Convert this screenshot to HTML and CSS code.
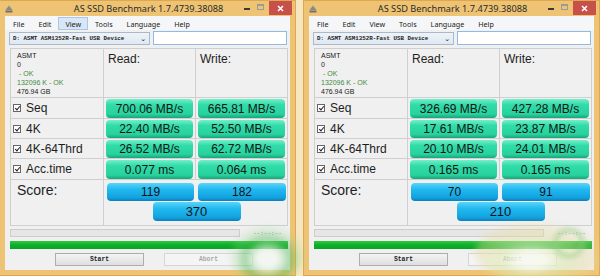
FILE: index.html
```html
<!DOCTYPE html>
<html lang="en">
<head>
<meta charset="UTF-8">
<title>AS SSD Benchmark</title>
<link rel="stylesheet" href="styles.css">
</head>
<body>
<div class="desk">

<div class="window">
    <div class="titlebar">
        <svg class="app-icon" width="8" height="8" viewBox="0 0 8 8"><path d="M4 0.5 L7.5 5 H0.5 Z" fill="#8a8a8a"/><rect x="0.5" y="5.5" width="7" height="2" fill="#6e6e6e"/></svg>
        <span class="title">AS SSD Benchmark 1.7.4739.38088</span>
        <div class="caption">
            <span class="cap-min"></span>
            <span class="cap-max"></span>
            <span class="cap-close"><svg width="7" height="7" viewBox="0 0 7 7"><path d="M1 1 L6 6 M6 1 L1 6" stroke="#fff" stroke-width="1.5"/></svg></span>
        </div>
    </div>
    <div class="client">
        <ul class="menu">
            <li>File</li>
            <li>Edit</li>
            <li class="active">View</li>
            <li>Tools</li>
            <li>Language</li>
            <li>Help</li>
        </ul>
        <div class="toolbar">
            <div class="combo"><span>D: ASMT ASM1352R-Fast USB Device</span><span class="combo-arrow">&#8964;</span></div>
            <div class="textbox"></div>
        </div>
        <div class="results">
            <div class="cell info">
                <div>ASMT</div>
                <div>0</div>
                <div class="ok">&nbsp;- OK</div>
                <div class="ok">132096 K - OK</div>
                <div>476.94 GB</div>
            </div>
            <div class="cell head">Read:</div>
            <div class="cell head">Write:</div>

            <div class="cell label"><span class="check"></span>Seq</div>
            <div class="cell"><div class="val">700.06 MB/s</div></div>
            <div class="cell"><div class="val">665.81 MB/s</div></div>

            <div class="cell label"><span class="check"></span>4K</div>
            <div class="cell"><div class="val">22.40 MB/s</div></div>
            <div class="cell"><div class="val">52.50 MB/s</div></div>

            <div class="cell label"><span class="check"></span>4K-64Thrd</div>
            <div class="cell"><div class="val">26.52 MB/s</div></div>
            <div class="cell"><div class="val">62.72 MB/s</div></div>

            <div class="cell label"><span class="check"></span>Acc.time</div>
            <div class="cell"><div class="val">0.077 ms</div></div>
            <div class="cell"><div class="val">0.064 ms</div></div>

            <div class="cell score-label">Score:</div>
            <div class="cell scores">
                <div class="score">119</div>
                <div class="score">182</div>
                <div class="score total">370</div>
            </div>
        </div>
        <div class="progress-row">
            <div class="progress"></div>
            <span class="time">--:--:--</span>
        </div>
        <div class="bar-done"></div>
        <div class="buttons">
            <button class="btn">Start</button>
            <button class="btn" disabled>Abort</button>
        </div>
    </div>
</div>

<div class="window">
    <div class="titlebar">
        <svg class="app-icon" width="8" height="8" viewBox="0 0 8 8"><path d="M4 0.5 L7.5 5 H0.5 Z" fill="#8a8a8a"/><rect x="0.5" y="5.5" width="7" height="2" fill="#6e6e6e"/></svg>
        <span class="title">AS SSD Benchmark 1.7.4739.38088</span>
        <div class="caption">
            <span class="cap-min"></span>
            <span class="cap-max"></span>
            <span class="cap-close"><svg width="7" height="7" viewBox="0 0 7 7"><path d="M1 1 L6 6 M6 1 L1 6" stroke="#fff" stroke-width="1.5"/></svg></span>
        </div>
    </div>
    <div class="client">
        <ul class="menu">
            <li>File</li>
            <li>Edit</li>
            <li>View</li>
            <li>Tools</li>
            <li>Language</li>
            <li>Help</li>
        </ul>
        <div class="toolbar">
            <div class="combo"><span>D: ASMT ASM1352R-Fast USB Device</span><span class="combo-arrow">&#8964;</span></div>
            <div class="textbox"></div>
        </div>
        <div class="results">
            <div class="cell info">
                <div>ASMT</div>
                <div>0</div>
                <div class="ok">&nbsp;- OK</div>
                <div class="ok">132096 K - OK</div>
                <div>476.94 GB</div>
            </div>
            <div class="cell head">Read:</div>
            <div class="cell head">Write:</div>

            <div class="cell label"><span class="check"></span>Seq</div>
            <div class="cell"><div class="val">326.69 MB/s</div></div>
            <div class="cell"><div class="val">427.28 MB/s</div></div>

            <div class="cell label"><span class="check"></span>4K</div>
            <div class="cell"><div class="val">17.61 MB/s</div></div>
            <div class="cell"><div class="val">23.87 MB/s</div></div>

            <div class="cell label"><span class="check"></span>4K-64Thrd</div>
            <div class="cell"><div class="val">20.10 MB/s</div></div>
            <div class="cell"><div class="val">24.01 MB/s</div></div>

            <div class="cell label"><span class="check"></span>Acc.time</div>
            <div class="cell"><div class="val">0.165 ms</div></div>
            <div class="cell"><div class="val">0.165 ms</div></div>

            <div class="cell score-label">Score:</div>
            <div class="cell scores">
                <div class="score">70</div>
                <div class="score">91</div>
                <div class="score total">210</div>
            </div>
        </div>
        <div class="progress-row">
            <div class="progress"></div>
            <span class="time">--:--:--</span>
        </div>
        <div class="bar-done"></div>
        <div class="buttons">
            <button class="btn">Start</button>
            <button class="btn" disabled>Abort</button>
        </div>
    </div>
</div>

<!-- watermark blur over the lower right corners -->
<div class="wm wm-one"></div>
<div class="wm wm-two"></div>
<div class="wm wm-three"></div>

</div>
</body>
</html>
```

FILE: styles.css
```css
* {
    box-sizing: border-box;
}
body {
    margin: 0;
    width: 600px;
    height: 276px;
    overflow: hidden;
    background: #f6e6c2;
    font-family: "Liberation Sans", Arial, sans-serif;
    color: #1e1e1e;
}
.desk {
    position: relative;
    display: flex;
    gap: 7px;
    margin-left: -1px;
    width: 601px;
    height: 276px;
    overflow: hidden;
}
.window {
    width: 297px;
    height: 276px;
    background: #eec474;
    border: 1px solid #dea94e;
    display: flex;
    flex-direction: column;
    flex-shrink: 0;
}
.titlebar {
    height: 15px;
    display: grid;
    grid-template-columns: 1fr auto 1fr;
    align-items: center;
    padding: 0 3px 0 5px;
}
.app-icon {
    display: block;
}
.title {
    font-family: "Noto Sans", sans-serif;
    font-size: 9.2px;
    color: #2b2b2b;
    line-height: 14px;
}
.caption {
    justify-self: end;
    align-self: start;
    display: flex;
    align-items: flex-start;
}
.cap-min {
    width: 6px;
    height: 2px;
    background: #3a3a3a;
    margin: 7px 7px 0 0;
}
.cap-max {
    width: 7px;
    height: 6px;
    border: 1px solid #9b9b9b;
    border-top-width: 2px;
    margin: 3px 5px 0 0;
}
.cap-close {
    width: 23px;
    height: 14px;
    background: #c7504a;
    display: flex;
    align-items: center;
    justify-content: center;
}
.client {
    margin: 0 5px 5px;
    flex: 1;
    background: #f0f0f0;
    display: flex;
    flex-direction: column;
}
.menu {
    list-style: none;
    margin: 0;
    padding: 0 0 0 1px;
    height: 14px;
    display: flex;
    background: #f5f6f7;
    font-family: "Noto Sans", sans-serif;
    font-size: 7.2px;
    color: #222;
}
.menu li {
    padding: 0 6px;
    line-height: 12px;
    margin-top: 1px;
    border: 1px solid transparent;
}
.menu li.active {
    background: #d8e6f5;
    border-color: #a9c8e8;
}
.toolbar {
    display: flex;
    gap: 3px;
    padding-left: 4px;
    margin-top: 1px;
    height: 14px;
}
.combo {
    width: 141px;
    height: 13px;
    margin-top: 1px;
    border: 1px solid #acb8c6;
    background: linear-gradient(#eef3f9, #dfe8f2);
    display: flex;
    align-items: center;
    justify-content: space-between;
    padding: 0 3px;
    font-family: "Liberation Mono", monospace;
    font-weight: bold;
    font-size: 5.8px;
    color: #222;
}
.combo-arrow {
    font-family: "DejaVu Sans", sans-serif;
    font-size: 7px;
    line-height: 4px;
    color: #444;
}
.textbox {
    width: 134px;
    height: 14px;
    border: 1px solid #8fbce6;
    background: #fff;
}
.results {
    margin: 3px 0 0 5px;
    width: 278px;
    display: grid;
    grid-template-columns: 92px 91px 91px;
    grid-template-rows: 48px 20px 19px 19px 20px 45px;
    gap: 1px;
    padding: 1px;
    background: #cfcfcf;
}
.cell {
    background: #f0f0f0;
    padding: 0 2px;
    display: flex;
    align-items: stretch;
}
.info {
    flex-direction: column;
    padding: 2px 0 0 6px;
    font-size: 7px;
    line-height: 9px;
    color: #222;
}
.info .ok {
    color: #3d8a3f;
}
.head {
    font-size: 12px;
    padding: 3px 0 0 4px;
    align-items: flex-start;
}
.label {
    align-items: center;
    font-size: 12px;
    padding: 0 0 0 2px;
}
.check {
    width: 8px;
    height: 8px;
    border: 1px solid #666;
    background: #fff;
    margin-right: 5px;
    position: relative;
}
.check::after {
    content: "";
    position: absolute;
    left: 1.5px;
    top: 0;
    width: 2px;
    height: 4px;
    border: solid #222;
    border-width: 0 1.2px 1.2px 0;
    transform: rotate(40deg);
}
.cell .val {
    flex: 1;
    margin: 1px 0 0;
    border-radius: 4px;
    background: linear-gradient(#74efcb, #32dca8 30%, #27d29e 80%, #17a57c);
    display: flex;
    align-items: center;
    justify-content: center;
    font-size: 12px;
    color: #141414;
}
.score-label {
    font-size: 14px;
    padding: 2px 0 0 6px;
    align-items: flex-start;
}
.scores {
    grid-column: 2 / span 2;
    display: grid;
    grid-template-columns: 87px 88px;
    grid-template-rows: 18px 19px;
    column-gap: 4px;
    row-gap: 1px;
    padding: 3px 0 0 3px;
    align-content: start;
}
.score {
    border-radius: 4px;
    background: linear-gradient(#5ad4fa, #22b9ef 35%, #12a3e0 80%, #0a80bb);
    display: flex;
    align-items: center;
    justify-content: center;
    font-size: 12px;
    color: #141414;
}
.score.total {
    grid-column: 1 / span 2;
    justify-self: center;
    width: 88px;
    font-size: 13px;
}
.progress-row {
    display: flex;
    align-items: center;
    margin: 3px 0 0 5px;
    height: 8px;
}
.progress {
    width: 230px;
    height: 8px;
    border: 1px solid #cdcdcd;
    background: #e6e6e6;
}
.time {
    margin-left: 13px;
    font-family: "Liberation Mono", monospace;
    font-size: 6px;
    color: #777;
}
.bar-done {
    margin: 4px 0 0 5px;
    width: 278px;
    height: 8px;
    background: linear-gradient(#2ec743, #0bb02a 50%, #07a424);
}
.buttons {
    display: flex;
    gap: 20px;
    margin: 4px 0 0 50px;
}
.btn {
    width: 89px;
    height: 13px;
    padding: 0;
    border: 1px solid #adadad;
    background: linear-gradient(#f4f4f4, #dedede);
    font-family: "Liberation Mono", monospace;
    font-weight: bold;
    font-size: 6.4px;
    color: #222;
}
.btn:disabled {
    border-color: #d6d6d6;
    background: #f4f4f4;
    color: #a9a9a9;
}
.wm {
    position: absolute;
    border-radius: 50%;
    pointer-events: none;
}
.wm-one {
    left: 228px;
    top: 224px;
    width: 78px;
    height: 60px;
    background: radial-gradient(ellipse at 52% 58%, rgba(245,248,242,.75) 0 16%, rgba(200,230,195,.6) 26%, rgba(70,180,80,.45) 40%, rgba(150,215,140,.25) 56%, rgba(255,255,255,0) 72%);
    filter: blur(2px);
}
.wm-two {
    left: 476px;
    top: 220px;
    width: 134px;
    height: 64px;
    background: radial-gradient(ellipse at 42% 62%, rgba(248,250,240,.8) 0 12%, rgba(220,232,175,.6) 28%, rgba(232,218,155,.4) 50%, rgba(255,255,255,0) 72%);
    filter: blur(3px);
}
.wm-three {
    left: 548px;
    top: 226px;
    width: 44px;
    height: 34px;
    background: radial-gradient(circle, rgba(255,255,255,0) 0 30%, rgba(140,205,130,.4) 45%, rgba(255,255,255,0) 70%);
    filter: blur(1px);
}
```
